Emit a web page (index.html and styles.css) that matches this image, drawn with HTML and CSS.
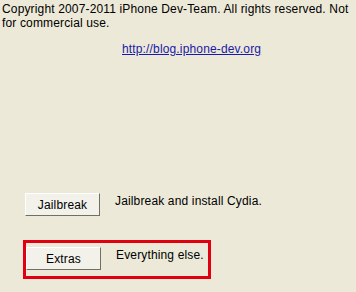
FILE: index.html
```html
<!DOCTYPE html>
<html lang="en">
<head>
    <meta charset="UTF-8">
    <title>redsn0w</title>
    <link rel="stylesheet" href="styles.css">
</head>
<body>
    <div class="panel">
        <p class="copyright">Copyright 2007-2011 iPhone Dev-Team. All rights reserved. Not for commercial use.</p>
        <div class="link-row">
            <a href="#">http://blog.iphone-dev.org</a>
        </div>

        <div class="action">
            <button class="xp-btn">Jailbreak</button>
            <span class="desc">Jailbreak and install Cydia.</span>
        </div>

        <div class="action highlight">
            <button class="xp-btn">Extras</button>
            <span class="desc">Everything else.</span>
        </div>
    </div>
</body>
</html>
```

FILE: styles.css
```css
body {
    margin: 0;
    background-color: #ece9d8;
    font-family: 'Liberation Sans', Arial, sans-serif;
    font-size: 12px;
    letter-spacing: 0.15px;
    color: #000;
}

.panel {
    width: 356px;
    height: 292px;
    padding: 2px 0 0 2px;
    box-sizing: border-box;
}

.copyright {
    margin: 0;
    line-height: 14px;
    width: 352px;
}

.link-row {
    margin-top: 12px;
    padding-left: 120px;
    line-height: 14px;
}

.link-row a {
    color: #1a1aa8;
}

.action {
    display: flex;
    align-items: flex-start;
    gap: 15px;
}

.xp-btn {
    width: 75px;
    height: 23px;
    font-family: inherit;
    font-size: 12px;
    letter-spacing: inherit;
    color: #000;
    background: #f2f1ea;
    border: 1px solid;
    border-color: #fff #716f64 #716f64 #fff;
    padding: 0;
}

.desc {
    padding-top: 1px;
}

.link-row + .action {
    margin: 137px 0 0 23px;
}

.highlight {
    width: 188px;
    height: 39px;
    box-sizing: border-box;
    border: 3px solid #e00010;
    margin: 24px 0 0 21px;
    padding: 4px 0 0 0;
}
```
